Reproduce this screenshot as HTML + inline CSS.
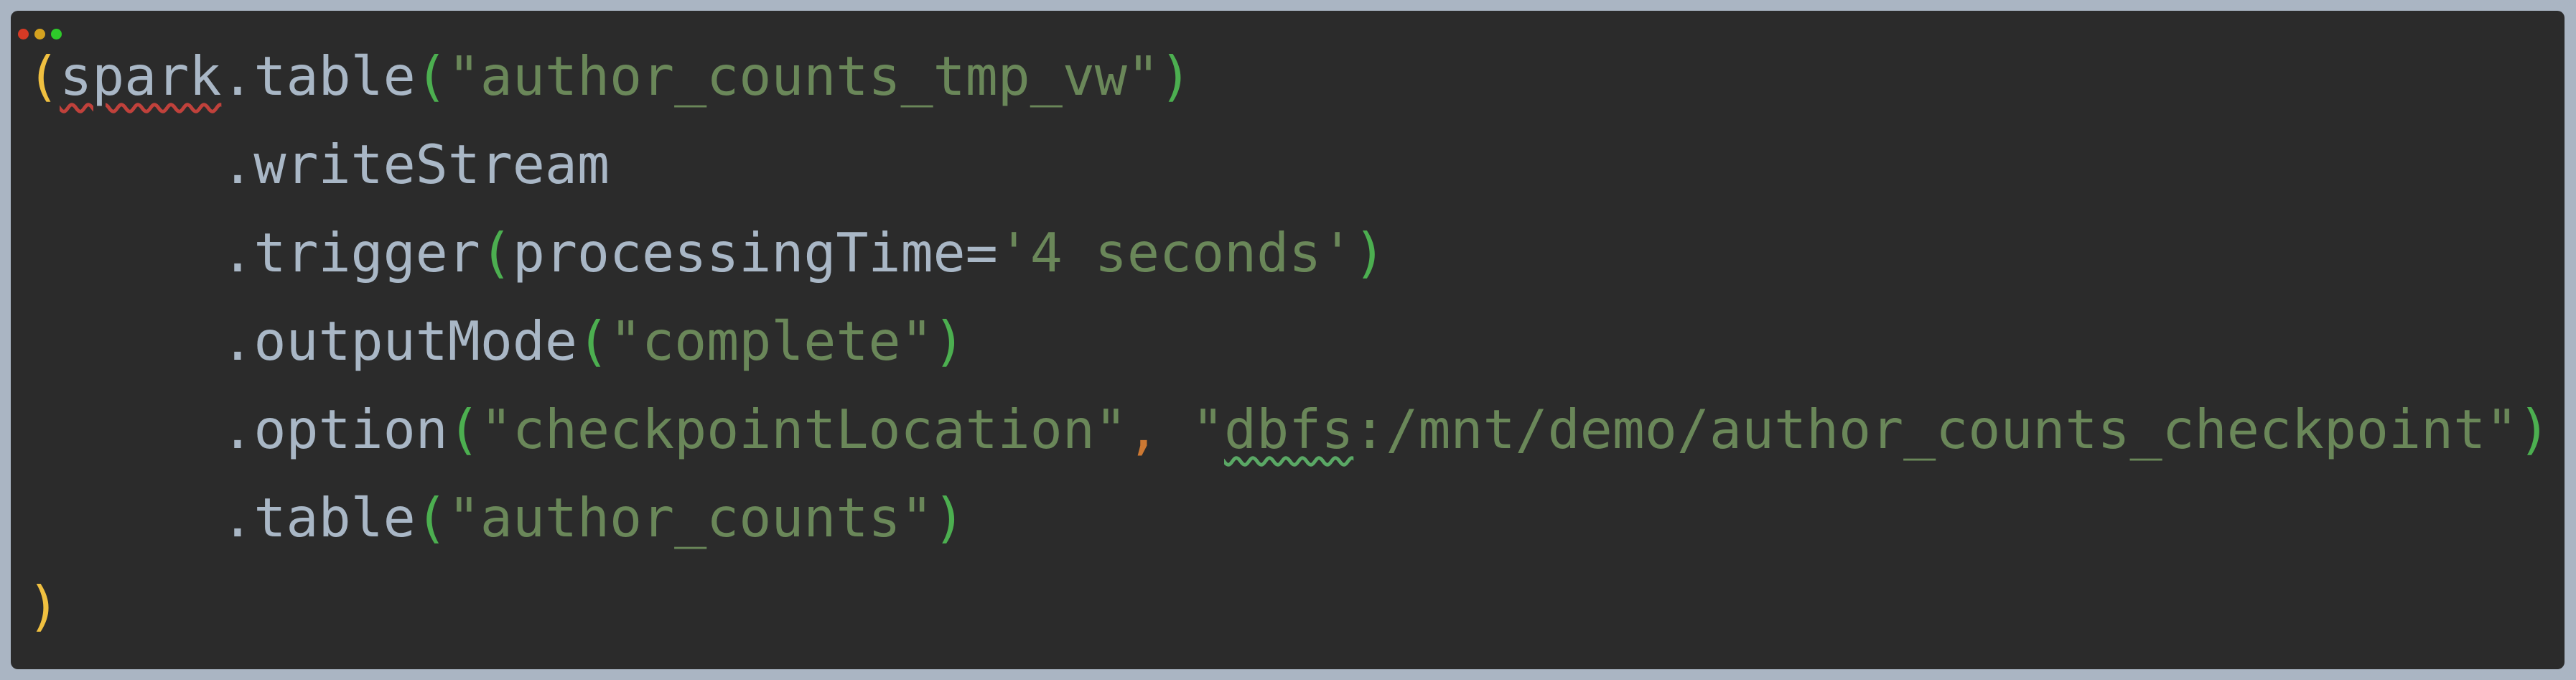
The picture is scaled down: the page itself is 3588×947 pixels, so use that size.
<!DOCTYPE html>
<html><head><meta charset="utf-8"><style>
html,body{margin:0;padding:0;width:3588px;height:947px;background:#aab5c3;overflow:hidden}
.win{position:absolute;left:15px;top:15px;width:3557px;height:917px;background:#2b2b2b;border-radius:10px}
.dot{position:absolute;top:25px;width:15px;height:15px;border-radius:50%}
pre{position:absolute;left:38px;top:45px;margin:0;font-family:"DejaVu Sans Mono","Liberation Mono",monospace;font-size:75px;line-height:123px;color:#a9b7c6;white-space:pre;letter-spacing:-0.1px}
.s{color:#6a8759}.y{color:#f0c040}.g{color:#4caf50}.o{color:#cc7832}
.ur{text-decoration:underline wavy #c0413b;text-decoration-thickness:5px;text-underline-offset:12px}
.ug{text-decoration:underline wavy #5aa865;text-decoration-thickness:5px;text-underline-offset:12px}
</style></head><body>
<div class="win">
<div class="dot" style="left:10px;background:#d63a25"></div>
<div class="dot" style="left:33px;background:#d4a21f"></div>
<div class="dot" style="left:56px;background:#2ecb2a"></div>
</div>
<pre><span class="y">(</span><span class="ur">spark</span>.table<span class="g">(</span><span class="s">"author_counts_tmp_vw"</span><span class="g">)</span>
      .writeStream
      .trigger<span class="g">(</span>processingTime=<span class="s">'4 seconds'</span><span class="g">)</span>
      .outputMode<span class="g">(</span><span class="s">"complete"</span><span class="g">)</span>
      .option<span class="g">(</span><span class="s">"checkpointLocation"</span><span class="o">,</span> <span class="s">"<span class="ug">dbfs</span>:/mnt/demo/author_counts_checkpoint"</span><span class="g">)</span>
      .table<span class="g">(</span><span class="s">"author_counts"</span><span class="g">)</span>
<span class="y">)</span></pre>
</body></html>
